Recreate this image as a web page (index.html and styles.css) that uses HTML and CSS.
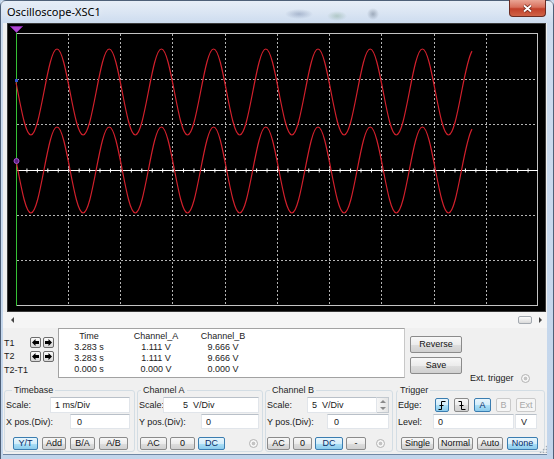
FILE: index.html
```html
<!DOCTYPE html>
<html lang="en">
<head>
    <meta charset="UTF-8">
    <title>Oscilloscope-XSC1</title>
    <link rel="stylesheet" href="styles.css">
</head>
<body>
<div class="window">
    <div class="titlebar">
        <span class="title">Oscilloscope-XSC1</span>
        <span class="close">
            <svg width="11" height="9" viewBox="0 0 11 9">
                <path d="M2,1.5 L9,7.5 M9,1.5 L2,7.5" stroke="#6a2418" stroke-width="3.4"/>
                <path d="M2,1.5 L9,7.5 M9,1.5 L2,7.5" stroke="#fff" stroke-width="1.8"/>
            </svg>
        </span>
    </div>

    <div class="client">
        <!-- screen -->
        <div class="scope">
            <svg width="537" height="287" viewBox="8 24 537 287">
                <rect x="8" y="24" width="537" height="287" fill="#000"/>
                <g stroke="#b4b4b4" stroke-width="1" stroke-dasharray="2 2" fill="none">
                    <path d="M68.5,34V306M120.5,34V306M172.5,34V306M225.5,34V306M277.5,34V306M329.5,34V306M381.5,34V306M434.5,34V306M486.5,34V306"/>
                    <path d="M17,79.5H538M17,124.5H538M17,215.5H538M17,260.5H538"/>
                </g>
                <rect x="16.5" y="33.5" width="521" height="272" fill="none" stroke="#c4c4c4"/>
                <line x1="16" y1="170.5" x2="538" y2="170.5" stroke="#fff"/>
                <line x1="16" y1="170.5" x2="538" y2="170.5" stroke="#fff" stroke-width="4" stroke-dasharray="1 9.44"/>
                <line x1="16.5" y1="33" x2="16.5" y2="306" stroke="#35c035"/>
                <path id="wave" fill="none" stroke="#d2202c" stroke-width="1.2"
                      d="M16,82.4L17.85,92c4.256,22.03 8.327,43 13.05,43c4.723,0 8.794,-20.97 13.05,-43c4.256,-22.03 8.327,-43 13.05,-43c4.723,0 8.794,20.97 13.05,43c4.256,22.03 8.327,43 13.05,43c4.723,0 8.794,-20.97 13.05,-43c4.256,-22.03 8.327,-43 13.05,-43c4.723,0 8.794,20.97 13.05,43c4.256,22.03 8.327,43 13.05,43c4.723,0 8.794,-20.97 13.05,-43c4.256,-22.03 8.327,-43 13.05,-43c4.723,0 8.794,20.97 13.05,43c4.256,22.03 8.327,43 13.05,43c4.723,0 8.794,-20.97 13.05,-43c4.256,-22.03 8.327,-43 13.05,-43c4.723,0 8.794,20.97 13.05,43c4.256,22.03 8.327,43 13.05,43c4.723,0 8.794,-20.97 13.05,-43c4.256,-22.03 8.327,-43 13.05,-43c4.723,0 8.794,20.97 13.05,43c4.256,22.03 8.327,43 13.05,43c4.723,0 8.794,-20.97 13.05,-43c4.256,-22.03 8.327,-43 13.05,-43c4.723,0 8.794,20.97 13.05,43c4.256,22.03 8.327,43 13.05,43c4.723,0 8.794,-20.97 13.05,-43c4.256,-22.03 8.327,-43 13.05,-43c4.723,0 8.794,20.97 13.05,43c4.256,22.03 8.327,43 13.05,43c4.723,0 8.794,-20.97 13.05,-43c4.256,-22.03 8.327,-43 13.05,-43c4.723,0 8.794,20.97 13.05,43c4.256,22.03 8.327,43 13.05,43c4.723,0 8.794,-20.97 13.05,-43c3.483,-18.05 6.967,-35.36 10.45,-40.9"/>
                <use href="#wave" y="78"/>
                <rect x="15" y="79" width="3" height="3" fill="#3452d0"/>
                <circle cx="16.5" cy="161" r="2.5" fill="#5c2080" stroke="#a550d6"/>
                <path d="M10.5,26.5h12l-6,6z" fill="#b048d4" stroke="#7c2a9c"/>
            </svg>
        </div>

        <div class="hscroll">
            <span class="scroll-arrow left"></span>
            <span class="scroll-thumb"></span>
            <span class="scroll-arrow right"></span>
        </div>

        <!-- cursor readout -->
        <div class="readout">
            <div class="cursors">
                <div class="cursor-row">
                    <span class="cursor-name">T1</span>
                    <button class="arrow-btn"><svg width="7" height="7" viewBox="0 0 7 7"><path d="M0,3.5 3.5,0 3.5,2 7,2 7,5 3.5,5 3.5,7z"/></svg></button>
                    <button class="arrow-btn"><svg width="7" height="7" viewBox="0 0 7 7"><path d="M7,3.5 3.5,0 3.5,2 0,2 0,5 3.5,5 3.5,7z"/></svg></button>
                </div>
                <div class="cursor-row tall">
                    <span class="cursor-name">T2</span>
                    <button class="arrow-btn"><svg width="7" height="7" viewBox="0 0 7 7"><path d="M0,3.5 3.5,0 3.5,2 7,2 7,5 3.5,5 3.5,7z"/></svg></button>
                    <button class="arrow-btn"><svg width="7" height="7" viewBox="0 0 7 7"><path d="M7,3.5 3.5,0 3.5,2 0,2 0,5 3.5,5 3.5,7z"/></svg></button>
                </div>
                <div class="cursor-row">
                    <span class="cursor-name">T2-T1</span>
                </div>
            </div>

            <div class="values">
                <span>Time</span><span>Channel_A</span><span>Channel_B</span>
                <span>3.283 s</span><span>1.111 V</span><span>9.666 V</span>
                <span>3.283 s</span><span>1.111 V</span><span>9.666 V</span>
                <span>0.000 s</span><span>0.000 V</span><span>0.000 V</span>
            </div>

            <div class="side">
                <button class="btn big">Reverse</button>
                <button class="btn big">Save</button>
            </div>

            <div class="ext">Ext. trigger <span class="radio"></span></div>
        </div>

        <!-- settings -->
        <div class="controls">
            <fieldset class="group timebase">
                <legend>Timebase</legend>
                <div class="row">
                    <label class="lbl w44">Scale:</label>
                    <input class="field w80" type="text" value="1 ms/Div">
                </div>
                <div class="row second">
                    <label class="lbl w64">X pos.(Div):</label>
                    <input class="field w60 indent" type="text" value="0">
                </div>
                <div class="btn-row">
                    <button class="btn on w25">Y/T</button>
                    <button class="btn w24">Add</button>
                    <button class="btn w25">B/A</button>
                    <button class="btn w29">A/B</button>
                </div>
            </fieldset>

            <fieldset class="group channel-a">
                <legend>Channel A</legend>
                <div class="row">
                    <label class="lbl w24">Scale:</label>
                    <input class="field w96 far" type="text" value="5  V/Div">
                </div>
                <div class="row second">
                    <label class="lbl w62">Y pos.(Div):</label>
                    <input class="field w58" type="text" value="0">
                </div>
                <div class="btn-row narrow">
                    <button class="btn w27">AC</button>
                    <button class="btn w25">0</button>
                    <button class="btn on w27">DC</button>
                    <span class="radio"></span>
                </div>
            </fieldset>

            <fieldset class="group channel-b">
                <legend>Channel B</legend>
                <div class="row">
                    <label class="lbl w40">Scale:</label>
                    <input class="field w70" type="text" value="5  V/Div">
                    <span class="spin"><span class="up"></span><span class="down"></span></span>
                </div>
                <div class="row second">
                    <label class="lbl w60">Y pos.(Div):</label>
                    <input class="field w62 indent" type="text" value="0">
                </div>
                <div class="btn-row narrow">
                    <button class="btn w23">AC</button>
                    <button class="btn w19">0</button>
                    <button class="btn on w28">DC</button>
                    <button class="btn w20">-</button>
                    <span class="radio"></span>
                </div>
            </fieldset>

            <fieldset class="group trigger">
                <legend>Trigger</legend>
                <div class="row edges">
                    <label class="lbl w37">Edge:</label>
                    <button class="btn on edge w14"><svg width="8" height="9" viewBox="0 0 8 9"><path d="M0.5,8.5H3.5V0.5H7.5M1.5,4.5H5.5" stroke="#000" fill="none"/></svg></button>
                    <button class="btn edge w15"><svg width="8" height="9" viewBox="0 0 8 9"><path d="M0.5,0.5H3.5V8.5H7.5M1.5,4.5H5.5" stroke="#000" fill="none"/></svg></button>
                    <button class="btn on edge w17">A</button>
                    <button class="btn off edge w15">B</button>
                    <button class="btn off edge w20">Ext</button>
                </div>
                <div class="row second">
                    <label class="lbl w35">Level:</label>
                    <input class="field w81" type="text" value="0">
                    <input class="field w22 unit" type="text" value="V">
                </div>
                <div class="btn-row">
                    <button class="btn w33">Single</button>
                    <button class="btn w35">Normal</button>
                    <button class="btn w26">Auto</button>
                    <button class="btn on w31">None</button>
                </div>
            </fieldset>
        </div>

        <span class="grip"></span>
    </div>
</div>
</body>
</html>
```

FILE: styles.css
```css
html, body {
    margin: 0;
    padding: 0;
    overflow: hidden;
    background: #c4d6ec;
}

body {
    font-family: "Liberation Sans", Arial, sans-serif;
    font-size: 9px;
    color: #1a1a1a;
}

/* window frame */
.window {
    box-sizing: border-box;
    width: 554px;
    height: 462px;
    border: 1px solid #4e6078;
    border-radius: 6px 6px 0 0;
    background: linear-gradient(to bottom, #dae5f3 0, #cddcef 22px, #c2d5eb 100%);
    display: flex;
    flex-direction: column;
}

.titlebar {
    height: 22px;
    display: flex;
    align-items: flex-start;
    background:
        radial-gradient(ellipse 14px 5px at 298px 13px, rgba(80, 100, 140, 0.35), transparent),
        radial-gradient(ellipse 10px 5px at 336px 15px, rgba(90, 140, 100, 0.3), transparent),
        radial-gradient(ellipse 6px 6px at 372px 13px, rgba(70, 85, 105, 0.4), transparent),
        linear-gradient(to bottom, rgba(255, 255, 255, 0.35), rgba(255, 255, 255, 0));
}

.title {
    font-family: "Noto Sans", sans-serif;
    font-size: 11px;
    line-height: 22px;
    margin-left: 6px;
    color: #000;
    text-shadow: 0 0 6px #fff;
}

.close {
    box-sizing: border-box;
    width: 37px;
    height: 17px;
    margin: -1px 7px 0 auto;
    border: 1px solid #6b2c22;
    border-top: none;
    border-radius: 0 0 4px 4px;
    background: linear-gradient(to bottom, #eaa595 0%, #d8705c 45%, #c2402a 55%, #cf6347 100%);
    display: flex;
    align-items: center;
    justify-content: center;
}

.client {
    position: relative;
    margin: 0 6px 0 2px;
    height: 431px;
    background: #f0f0f0;
    box-shadow: 0 1px 0 #6f86a3;
}

/* screen */
.scope {
    width: 537px;
    height: 287px;
    margin-left: 4px;
    border: 1px solid #3a3a3a;
    background: #000;
}

.scope svg {
    display: block;
}

.hscroll {
    height: 16px;
    display: flex;
    align-items: center;
    background: #f5f5f5;
}

.scroll-arrow {
    width: 0;
    height: 0;
    border-top: 3px solid transparent;
    border-bottom: 3px solid transparent;
}

.scroll-arrow.left {
    margin-left: 8px;
    border-right: 3px solid #444;
}

.scroll-arrow.right {
    margin: 0 5px 0 7px;
    border-left: 3px solid #444;
}

.scroll-thumb {
    box-sizing: border-box;
    width: 14px;
    height: 8px;
    margin-left: auto;
    border: 1px solid #a3a9b0;
    border-radius: 2px;
    background: linear-gradient(to bottom, #fdfdfd, #dadada);
}

/* readout */
.readout {
    height: 53px;
    display: flex;
}

.cursors {
    box-sizing: border-box;
    width: 55px;
    padding: 8px 0 0 1px;
}

.cursor-row {
    height: 13px;
    display: flex;
    align-items: center;
}

.cursor-row.tall {
    height: 14px;
}

.cursor-name {
    width: 26px;
    flex: none;
}

.arrow-btn {
    box-sizing: border-box;
    width: 11px;
    height: 11px;
    margin: 0 2px 0 0;
    padding: 0;
    border: 1px solid #6c6c6c;
    border-radius: 2px;
    background: linear-gradient(to bottom, #fbfbfb, #d6d6d6);
    display: flex;
    align-items: center;
    justify-content: center;
}

.values {
    box-sizing: border-box;
    width: 347px;
    height: 50px;
    padding-top: 2px;
    border: 1px solid #a2a2a2;
    border-right-color: #c8c8c8;
    background: #fff;
    display: grid;
    grid-template-columns: 60px 74px 60px;
    grid-auto-rows: 11px;
    align-content: start;
    line-height: 11px;
    text-align: center;
    color: #222;
}

.side {
    width: 52px;
    margin-left: 5px;
    padding-top: 8px;
    display: flex;
    flex-direction: column;
    gap: 4px;
}

.ext {
    margin: 0 0 -2px 8px;
    align-self: flex-end;
    height: 10px;
    line-height: 10px;
    display: flex;
    align-items: center;
    white-space: nowrap;
}

.ext .radio {
    margin-left: 7px;
}

/* buttons and fields */
.btn {
    box-sizing: border-box;
    height: 13px;
    padding: 0;
    border: 1px solid #8b8b8b;
    border-radius: 2px;
    background: linear-gradient(to bottom, #f8f8f8 0%, #ececec 50%, #dedede 51%, #d0d0d0 100%);
    font: 9px "Liberation Sans", Arial, sans-serif;
    line-height: 11px;
    color: #111;
    flex: none;
}

.btn.big {
    width: 52px;
    height: 17px;
}

.btn.on {
    border-color: #3b7db0;
    background: linear-gradient(to bottom, #e8f6fd 0%, #d3edfa 50%, #ace0f7 51%, #8ccbec 100%);
    color: #0a2c66;
}

.btn.off {
    border-color: #cacaca;
    background: #f6f6f6;
    color: #a8a8a8;
}

.btn.edge {
    height: 14px;
    display: flex;
    align-items: center;
    justify-content: center;
}

.field {
    box-sizing: border-box;
    height: 16px;
    margin: 0;
    padding: 0 0 0 4px;
    border: 1px solid #e1e5ea;
    border-top-color: #b9c0c8;
    background: #fff;
    font: 9px "Liberation Sans", Arial, sans-serif;
    color: #1a1a1a;
    flex: none;
}

.field.indent {
    padding-left: 6px;
}

.field.far {
    padding-left: 19px;
}

.field.unit {
    margin-left: 1px;
    padding-left: 5px;
}

.radio {
    box-sizing: border-box;
    width: 9px;
    height: 9px;
    border: 1px solid #b3b3b3;
    border-radius: 50%;
    background: radial-gradient(circle, #c4c4c4 0, #c4c4c4 1.5px, #f6f6f6 2.2px);
    flex: none;
}

.spin {
    box-sizing: border-box;
    width: 12px;
    height: 16px;
    border: 1px solid #c3c9cf;
    border-left: none;
    background: linear-gradient(to right, #f6f6f6, #e4e4e4);
    display: flex;
    flex-direction: column;
    align-items: center;
    justify-content: space-around;
}

.spin .up,
.spin .down {
    width: 0;
    height: 0;
    border-left: 3px solid transparent;
    border-right: 3px solid transparent;
}

.spin .up {
    border-bottom: 3px solid #8a8a8a;
}

.spin .down {
    border-top: 3px solid #8a8a8a;
}

/* group boxes */
.controls {
    display: flex;
    gap: 2px;
    padding: 4px 0 0 1px;
}

.group {
    box-sizing: border-box;
    margin: 0;
    padding: 0 1px 1px;
    border: 1px solid #d3dde4;
    border-radius: 3px;
    min-width: 0;
}

.group legend {
    margin-left: 2px;
    padding: 0 2px;
    line-height: 11px;
    color: #1e1e1e;
}

.timebase { width: 131px; }
.channel-a { width: 126px; }
.channel-b { width: 128px; }
.trigger { width: 149px; margin-left: 1px; }

.timebase legend { margin-left: 6px; }
.channel-b legend { margin-left: 3px; }
.trigger legend { margin-left: 0; }

.row {
    height: 16px;
    margin-top: 1px;
    display: flex;
    align-items: center;
}

.row.second {
    height: 15px;
}

.row.second .field {
    height: 15px;
}

.row.edges {
    gap: 0;
}

.row.edges .btn + .btn {
    margin-left: 5px;
}

.lbl {
    flex: none;
    white-space: nowrap;
}

.btn-row {
    height: 13px;
    margin-top: 8px;
    display: flex;
    align-items: center;
    gap: 4px;
}

.timebase .btn-row { padding-left: 7px; }
.channel-a .btn-row { padding-left: 1px; gap: 3px; }
.channel-a .radio { margin-left: 21px; }
.channel-b .btn-row { gap: 3px; }
.channel-b .radio { margin-left: 7px; }
.trigger .btn-row { padding-left: 3px; }

.w14 { width: 14px; }
.w15 { width: 15px; }
.w17 { width: 17px; }
.w19 { width: 19px; }
.w20 { width: 20px; }
.w22 { width: 22px; }
.w23 { width: 23px; }
.w24 { width: 24px; }
.w25 { width: 25px; }
.w26 { width: 26px; }
.w27 { width: 27px; }
.w28 { width: 28px; }
.w29 { width: 29px; }
.w31 { width: 31px; }
.w33 { width: 33px; }
.w35 { width: 35px; }
.w37 { width: 37px; }
.w40 { width: 40px; }
.w44 { width: 44px; }
.w58 { width: 58px; }
.w60 { width: 60px; }
.w62 { width: 62px; }
.w64 { width: 64px; }
.w70 { width: 70px; }
.w80 { width: 80px; }
.w81 { width: 81px; }
.w96 { width: 96px; }

.grip {
    position: absolute;
    right: 0;
    bottom: 1px;
    width: 8px;
    height: 8px;
    background-image: radial-gradient(circle, #a3acb5 0, #a3acb5 0.8px, transparent 1.1px);
    background-size: 3px 3px;
    clip-path: polygon(100% 0, 100% 100%, 0 100%);
}
```
